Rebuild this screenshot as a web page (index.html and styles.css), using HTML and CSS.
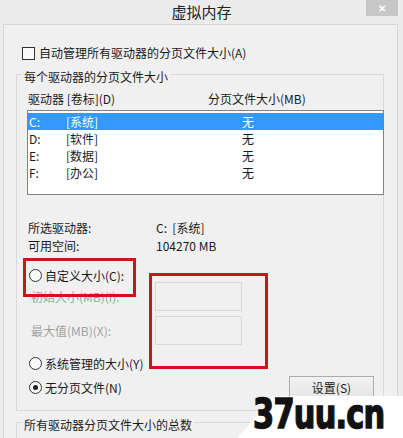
FILE: index.html
```html
<!DOCTYPE html>
<html lang="zh-CN">
<head>
    <meta charset="UTF-8">
    <meta name="viewport" content="width=device-width, initial-scale=1.0">
    <title>虚拟内存</title>
    <link rel="stylesheet" href="styles.css">
</head>
<body>
    <div class="window">
        <div class="titlebar">
            <span></span>
            <span class="title">虚拟内存</span>
            <span class="close">&#10005;</span>
        </div>

        <div class="panel">
            <label class="check-row"><span class="checkbox"></span>自动管理所有驱动器的分页文件大小(A)</label>

            <fieldset class="group">
                <legend>每个驱动器的分页文件大小</legend>
                <div class="list-head">
                    <span>驱动器 [卷标](D)</span>
                    <span>分页文件大小(MB)</span>
                </div>
                <div class="drive-list">
                    <div class="drive selected"><span>C:</span><span>[系统]</span><span>无</span></div>
                    <div class="drive"><span>D:</span><span>[软件]</span><span>无</span></div>
                    <div class="drive"><span>E:</span><span>[数据]</span><span>无</span></div>
                    <div class="drive"><span>F:</span><span>[办公]</span><span>无</span></div>
                </div>

                <div class="info-row first"><span>所选驱动器:</span><span>C:&nbsp; [系统]</span></div>
                <div class="info-row"><span>可用空间:</span><span>104270 MB</span></div>

                <div class="radio-row custom"><span class="radio"></span>自定义大小(C):</div>
                <div class="size-row first-size"><span class="size-label">初始大小(MB)(I):</span><span class="size-box"></span></div>
                <div class="size-row"><span class="size-label">最大值(MB)(X):</span><span class="size-box"></span></div>
                <div class="radio-row managed"><span class="radio"></span>系统管理的大小(Y)</div>
                <div class="radio-row none-row">
                    <span class="radio checked"></span>无分页文件(N)
                    <button class="set-button">设置(S)</button>
                </div>
            </fieldset>

            <fieldset class="group total">
                <legend>所有驱动器分页文件大小的总数</legend>
            </fieldset>
        </div>

        <!-- red marks drawn over the dialog -->
        <div class="mark mark-radio"></div>
        <div class="mark mark-boxes"></div>

        <!-- site watermark -->
        <div class="watermark-bg"></div>
        <div class="watermark">37uu.cn</div>
    </div>
</body>
</html>
```

FILE: styles.css
```css
body {
    margin: 0;
    padding: 0;
    font-family: "Noto Sans CJK SC", "Noto Sans", sans-serif;
    font-size: 12px;
    color: #1a1a1a;
}

.window {
    position: relative;
    width: 403px;
    height: 438px;
    overflow: hidden;
    background: #ececec;
}

/* Title bar */
.titlebar {
    display: grid;
    grid-template-columns: 1fr auto 1fr;
    align-items: start;
    height: 24px;
}

.title {
    font-size: 15px;
    line-height: 24px;
    color: #222;
}

.close {
    justify-self: end;
    width: 32px;
    height: 16px;
    margin-right: 5px;
    background: #c7c7c7;
    color: white;
    font-size: 10px;
    font-weight: bold;
    line-height: 16px;
    text-align: center;
}

/* Dialog body */
.panel {
    margin: 0 5px 0 3px;
    height: 414px;
    padding-top: 20px;
    box-sizing: border-box;
    border: 1px solid #d6d6d6;
    border-bottom: none;
    background: #f0f0f0;
}

.check-row {
    display: flex;
    align-items: center;
    height: 16px;
    line-height: 16px;
    padding-left: 18px;
}

.checkbox {
    width: 11px;
    height: 11px;
    margin-right: 4px;
    border: 1px solid #333;
    background: #fafafa;
}

/* Group boxes */
.group {
    margin: 2px 13px 0 12px;
    padding: 0 0 11px 0;
    min-width: 0;
    border: 1px solid #d9d9d9;
}

.group legend {
    margin-left: 5px;
    padding: 6px 2px 0 2px;
    line-height: 16px;
}

.group.total {
    margin-top: 0;
    height: 40px;
    border-bottom: none;
}

.list-head {
    display: flex;
    margin-top: 6px;
    padding-left: 11px;
    line-height: 16px;
}

.list-head span:first-child {
    width: 180px;
}

/* Drive list */
.drive-list {
    height: 85px;
    margin: 3px -1px 0 10px;
    padding-top: 2px;
    box-sizing: border-box;
    border: 1px solid #828282;
    background: white;
}

.drive {
    display: grid;
    grid-template-columns: 37px 176px 1fr;
    height: 17px;
    padding-left: 1px;
    line-height: 17px;
}

.drive.selected {
    background: #3399ff;
    color: white;
}

/* Selected drive info */
.info-row {
    display: grid;
    grid-template-columns: 128px 1fr;
    padding-left: 11px;
    line-height: 18px;
}

.info-row.first {
    margin-top: 24px;
}

.radio-row {
    display: flex;
    align-items: center;
    height: 18px;
    padding-left: 12px;
}

.radio {
    position: relative;
    width: 11px;
    height: 11px;
    margin-right: 3px;
    border: 1px solid #333;
    border-radius: 50%;
    background: #fafafa;
}

.radio.checked::after {
    content: "";
    position: absolute;
    left: 3px;
    top: 3px;
    width: 5px;
    height: 5px;
    border-radius: 50%;
    background: #222;
}

.radio-row.custom {
    margin-top: 11px;
}

.size-row {
    display: flex;
    align-items: center;
    margin-top: 5px;
    padding-left: 14px;
}

.size-row.first-size {
    margin-top: -2px;
}

.size-label {
    width: 124px;
    color: #a2a2a2;
}

.size-box {
    width: 85px;
    height: 27px;
    border: 1px solid #d9d9d9;
    background: #f0f0f0;
}

.radio-row.managed {
    margin-top: 9px;
}

.radio-row.none-row {
    height: 23px;
    margin-top: 4px;
}

.set-button {
    width: 85px;
    height: 23px;
    margin: 0 9px 0 auto;
    border: 1px solid #adadad;
    background: linear-gradient(#f2f2f2, #e6e6e6);
    font-family: inherit;
    font-size: 12px;
    color: #1a1a1a;
}

/* Red highlight boxes */
.mark {
    position: absolute;
    border: 3px solid #c8161e;
    box-sizing: border-box;
}

.mark-radio {
    left: 23px;
    top: 258px;
    width: 113px;
    height: 39px;
}

.mark-boxes {
    left: 149px;
    top: 273px;
    width: 119px;
    height: 96px;
}

/* Watermark */
.watermark-bg {
    position: absolute;
    left: 252px;
    top: 396px;
    width: 200px;
    height: 50px;
    background: white;
    transform: skewX(-40deg);
}

.watermark {
    position: absolute;
    left: 253px;
    top: 400px;
    font-family: "DejaVu Sans", sans-serif;
    font-size: 40px;
    font-weight: bold;
    line-height: 28px;
    letter-spacing: -1px;
    color: #111;
    -webkit-text-stroke: 1.5px #111;
    transform: scaleX(0.76);
    transform-origin: left top;
}
```
